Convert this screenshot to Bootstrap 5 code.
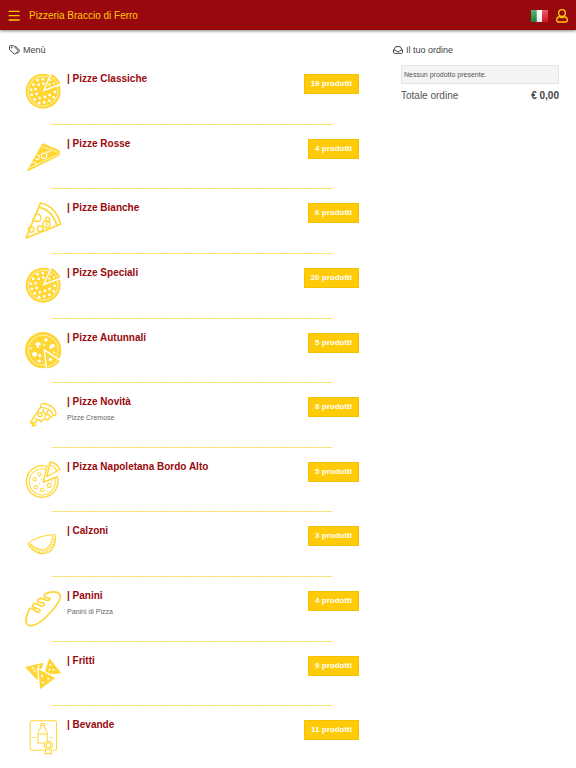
<!DOCTYPE html>
<html lang="it">
<head>
<meta charset="utf-8">
<meta name="viewport" content="width=device-width, initial-scale=1">
<title>Pizzeria Braccio di Ferro</title>
<link href="https://cdn.jsdelivr.net/npm/bootstrap@5.3.0/dist/css/bootstrap.min.css" rel="stylesheet">
<style>
:root { --brand: #99080d; --gold: #ffcb08; --sun: #ffd633; }
body { font-family: "Liberation Sans", Arial, sans-serif; font-size: 10px; line-height: 14px; color: #555; background: #fff; }
.topbar { background: var(--brand); height: 30px; padding: 1px 8px 0; box-shadow: 0 1px 3px rgba(0,0,0,.5); }
.topbar a, .topbar button { color: var(--gold); font-size: 10px; line-height: 14px; }
.bare { border: 0; background: none; padding: 0; display: block; }
.bare svg { display: block; }
.brand-name { margin-left: 9px; }
.heading { font-size: 9px; line-height: 14px; font-weight: 400; margin: 0; gap: 3px; padding: 13px 9px 3px; color: #444; }
.menu-list { display: grid; grid-auto-rows: 1fr; min-height: calc(100vh - 57px); }
.entry { padding: 12px 25px 0; }
.entry::after { content: ""; position: absolute; left: 52px; right: 52px; bottom: 0; height: 1px; background: repeating-linear-gradient(90deg, #ffdc55 0 2px, #fff3c4 2px 3px); }
.entry:last-child::after { display: none; }
.entry-icon { width: 37px; height: 37px; flex: none; margin-top: 1px; }
.entry-text { margin-left: 5px; }
.entry-title { font-size: 10px; line-height: 14px; font-weight: 700; margin: 0; }
.entry-title a { color: var(--brand); }
.entry-note { font-size: 7px; line-height: 10px; margin: 4px 0 0; color: #666; }
.count { font-size: 8px; line-height: 12px; font-weight: 700; color: #fff; background: var(--gold); border: 1px solid #f4c000; border-radius: 0; padding: 3px 6px; margin-top: 2px; }
.count:hover { background: #f0bd00; color: #fff; }
.order { padding: 0 17px; }
.empty-note { font-size: 7px; line-height: 10px; background: #f4f4f4; border: 1px solid #e3e3e3; padding: 4px 2px 3px; margin: 5px 0 4px; }
.total { line-height: 16px; }
.total strong { color: #444; }
.ln { fill: none; stroke: var(--sun); stroke-width: 4; stroke-linejoin: round; stroke-linecap: round; }
.thin { stroke-width: 3; }
.thick { stroke-width: 5; }
.drip { stroke-width: 7; }
.crimp { stroke-width: 8; stroke-dasharray: 4 4; stroke-linecap: butt; }
.fl { fill: var(--sun); }
.wl { fill: none; stroke: #fff; stroke-width: 3; }
.wl-thin { fill: none; stroke: #fff; stroke-width: 2; }
.wf { fill: #fff; }
</style>
<script src="https://cdn.jsdelivr.net/npm/bootstrap@5.3.0/dist/js/bootstrap.bundle.min.js"></script>
</head>
<body>
<svg class="d-none" aria-hidden="true">
  <symbol id="whole-pizza" viewBox="0 0 108 108">
    <circle class="fl" cx="53" cy="53" r="51"/>
    <circle class="wl-thin" cx="53" cy="53" r="44"/>
    <g class="wf">
      <circle cx="37" cy="21" r="4"/><circle cx="52" cy="18" r="4"/><circle cx="24" cy="34" r="4"/><circle cx="40" cy="35" r="4"/><circle cx="54" cy="31" r="4"/>
      <circle cx="18" cy="49" r="4"/><circle cx="31" cy="47" r="4"/><circle cx="20" cy="64" r="4"/><circle cx="34" cy="61" r="4"/><circle cx="28" cy="77" r="4"/>
      <circle cx="43" cy="73" r="4"/><circle cx="41" cy="88" r="4"/><circle cx="56" cy="86" r="4"/><circle cx="58" cy="70" r="4"/><circle cx="71" cy="81" r="4"/>
      <circle cx="72" cy="64" r="4"/><circle cx="84" cy="71" r="4"/><circle cx="87" cy="55" r="4"/>
    </g>
    <path class="fl" d="M55 51 77 0Q96 8 106 32Z" stroke="#fff" stroke-width="4"/>
    <path class="wl-thin" d="M74 10Q90 17 97 33"/>
    <g class="wf"><circle cx="75" cy="21" r="3"/><circle cx="85" cy="30" r="3"/><circle cx="71" cy="34" r="3"/></g>
  </symbol>
</svg>

<header class="topbar d-flex align-items-center sticky-top">
  <button class="bare" type="button" aria-label="Apri menu">
    <svg width="12" height="12" viewBox="0 0 36 36" stroke="currentColor" stroke-width="4"><path d="M2 4h33M2 17h33M2 30h33"/></svg>
  </button>
  <a class="brand-name text-decoration-none me-auto" href="#">Pizzeria Braccio di Ferro</a>
  <button class="bare me-2" type="button" aria-label="Lingua: italiano">
    <svg width="17" height="12" viewBox="0 0 51 36">
      <defs><linearGradient id="gloss" x2="0" y2="1"><stop stop-color="#fff" stop-opacity=".3"/><stop offset=".5" stop-color="#fff" stop-opacity=".12"/><stop offset="1" stop-color="#000" stop-opacity=".08"/></linearGradient></defs>
      <path fill="#169144" d="M0 0h17v36H0z"/><path fill="#f8f8f8" d="M17 0h17v36H17z"/><path fill="#df1b29" d="M34 0h17v36H34z"/><path fill="url(#gloss)" d="M0 0h51v36H0z"/>
    </svg>
  </button>
  <button class="bare" type="button" aria-label="Account">
    <svg width="12" height="14" viewBox="0 0 36 42" fill="none" stroke="currentColor" stroke-width="4"><circle cx="18" cy="12" r="10"/><path d="M9 23C4 25 2 29 2 34q0 5 4 5h24q4 0 4-5c0-5-2-9-7-11q-9 5-18 0Z"/></svg>
  </button>
</header>

<main class="container-fluid p-0">
  <div class="row g-0">
    <section class="col-8">
      <h1 class="heading d-flex align-items-center">
        <svg width="11" height="10" viewBox="0 0 33 30" fill="none" stroke="#444" stroke-width="3" stroke-linejoin="round"><path d="M1.500 4v9l14 14q2 1 3 0l8-8q1-2 0-3L13 2H4Q1.500 2 1.500 4Z"/><path d="m18 2 13 13q2 2 0 4l-8 8"/><circle cx="8" cy="8" r="1.500"/></svg>
        Menù
      </h1>
      <div class="menu-list">
        <article class="entry position-relative d-flex align-items-start">
          <svg class="entry-icon"><use href="#whole-pizza"/></svg>
          <div class="entry-text me-auto"><h2 class="entry-title"><a class="text-decoration-none" href="#">| Pizze Classiche</a></h2></div>
          <button class="btn count" type="button">19 prodotti</button>
        </article>
        <article class="entry position-relative d-flex align-items-start">
          <svg class="entry-icon" viewBox="0 0 108 108">
            <path class="fl" d="M49 18q2-3 6-2l42 18q6 3 5 9l-2 9L10 96q-4 1-2-4Z"/>
            <path class="wl-thin" d="M48 25 97 42M14 87 97 48"/>
            <circle class="wl" cx="56" cy="52" r="8"/><path class="wl" d="M34 49q13 2 7 11-4 5-11 0M22 72q11-5 12 7M75 36q-5 8-13 4"/>
          </svg>
          <div class="entry-text me-auto"><h2 class="entry-title"><a class="text-decoration-none" href="#">| Pizze Rosse</a></h2></div>
          <button class="btn count" type="button">4 prodotti</button>
        </article>
        <article class="entry position-relative d-flex align-items-start">
          <svg class="entry-icon" viewBox="0 0 108 108">
            <path class="ln thick" d="M45 3Q91 13 104 65L3 105ZM40 15Q81 25 93 69"/>
            <g class="ln"><path d="M30 36q15-3 17 9-1 13-13 12-8-1-11-7"/><circle cx="18" cy="80" r="8"/><circle cx="44" cy="78" r="8"/><circle cx="63" cy="65" r="10"/><circle cx="66" cy="51" r="6"/><path d="M63 61v8"/></g>
          </svg>
          <div class="entry-text me-auto"><h2 class="entry-title"><a class="text-decoration-none" href="#">| Pizze Bianche</a></h2></div>
          <button class="btn count" type="button">6 prodotti</button>
        </article>
        <article class="entry position-relative d-flex align-items-start">
          <svg class="entry-icon"><use href="#whole-pizza"/></svg>
          <div class="entry-text me-auto"><h2 class="entry-title"><a class="text-decoration-none" href="#">| Pizze Speciali</a></h2></div>
          <button class="btn count" type="button">20 prodotti</button>
        </article>
        <article class="entry position-relative d-flex align-items-start">
          <svg class="entry-icon" viewBox="0 0 108 108">
            <circle class="fl" cx="53" cy="53" r="53"/><circle class="wl-thin" cx="53" cy="53" r="44"/>
            <g class="wf"><path d="M29 38q1-8 8-9 9 0 10 8l-7 2 2 7h-7l-1-7ZM72 41l7-7q9 2 8 10l-8 2-4 5-4-4ZM38 66l7-2 3 7-6 3ZM35 84l8-4 5 6-7 3Z"/><circle cx="28" cy="65" r="7"/><circle cx="61" cy="23" r="5"/><circle cx="17" cy="48" r="3"/><circle cx="56" cy="38" r="3"/><circle cx="85" cy="60" r="3"/></g>
            <path class="fl" d="M56 52 104 84Q91 106 63 108Z" stroke="#fff" stroke-width="4"/>
            <path class="wl-thin" d="M95 84Q83 97 67 101"/><circle class="wf" cx="74" cy="80" r="5"/>
          </svg>
          <div class="entry-text me-auto"><h2 class="entry-title"><a class="text-decoration-none" href="#">| Pizze Autunnali</a></h2></div>
          <button class="btn count" type="button">5 prodotti</button>
        </article>
        <article class="entry position-relative d-flex align-items-start">
          <svg class="entry-icon" viewBox="0 0 108 108">
            <path class="ln" d="M46 27q2-7 9-5 29 5 35 26 2 8-4 9-5 0-7-6-6-15-28-17-7-1-5-7ZM45 34 18 73q-3 6 1 7l4-2 2 8q5 2 6-3l-1-9 13-5 2 5q5 2 6-4l10-4 2 4q6 2 6-5l10-5"/><g class="ln"><circle cx="44" cy="55" r="6"/><path d="M53 40q-1 9 7 10 7-1 7-7M58 62q0-9 8-8 7 1 7 7M29 66q7-1 7 6"/></g>
            <path class="ln drip" d="M23 78v8"/>
          </svg>
          <div class="entry-text me-auto"><h2 class="entry-title"><a class="text-decoration-none" href="#">| Pizze Novità</a></h2><p class="entry-note">Pizze Cremose</p></div>
          <button class="btn count" type="button">8 prodotti</button>
        </article>
        <article class="entry position-relative d-flex align-items-start">
          <svg class="entry-icon" viewBox="0 0 108 108">
            <path class="ln" d="M64 16A46 46 0 1 0 94 46L53 62Z"/><path class="ln thin" d="M59 24A38 38 0 1 0 87 51"/>
            <path class="ln" d="M73 3Q94 7 102 24L64 46ZM71 12Q86 14 92 28"/>
            <g class="ln thin"><circle cx="42" cy="39" r="5"/><circle cx="28" cy="53" r="5"/><circle cx="31" cy="76" r="5"/><circle cx="50" cy="85" r="5"/><circle cx="71" cy="71" r="6"/><path d="M46 53h1M42 65h1M55 71h1M20 66h1M78 58h1M64 86h1M77 23h1"/></g>
          </svg>
          <div class="entry-text me-auto"><h2 class="entry-title"><a class="text-decoration-none" href="#">| Pizza Napoletana Bordo Alto</a></h2></div>
          <button class="btn count" type="button">5 prodotti</button>
        </article>
        <article class="entry position-relative d-flex align-items-start">
          <svg class="entry-icon" viewBox="0 0 108 108">
            <path class="ln thin" d="M8 55Q36 31 88 28 94 80 52 84 27 83 8 55Z"/>
            <path class="ln thin" d="M17 55Q33 73 54 72 77 68 80 34"/>
            <path class="ln crimp" d="M14 59Q32 80 53 79 83 75 86 34"/>
          </svg>
          <div class="entry-text me-auto"><h2 class="entry-title"><a class="text-decoration-none" href="#">| Calzoni</a></h2></div>
          <button class="btn count" type="button">3 prodotti</button>
        </article>
        <article class="entry position-relative d-flex align-items-start">
          <svg class="entry-icon" viewBox="0 0 108 108">
            <path class="ln thick" d="M11 60Q-5 96 10 103 33 110 70 70 108 31 102 15 96 0 63 9M11 60q3-11 13-4l7 6q7 5 12 1 3-7-8-9-14-3-13-8 1-9 14-5l8 4q9 4 12-1 2-6-9-7-11-1-10-7 4-9 16-4l9 4q8 2 10-2 1-6-9-6-8-1-7-6 1-6 8-7"/>
          </svg>
          <div class="entry-text me-auto"><h2 class="entry-title"><a class="text-decoration-none" href="#">| Panini</a></h2><p class="entry-note">Panini di Pizza</p></div>
          <button class="btn count" type="button">4 prodotti</button>
        </article>
        <article class="entry position-relative d-flex align-items-start">
          <svg class="entry-icon" viewBox="0 0 108 108">
            <path class="fl" d="M0 35 50 23q4 0 3 4L38 70q-2 3-5 0ZM71 9 106 53q-22 4-50 2Z"/>
            <path class="fl" d="M37 38 92 67 46 101q-3 1-4-3Z" stroke="#fff" stroke-width="4"/>
            <g class="wf"><circle cx="28" cy="46" r="3"/><circle cx="40" cy="32" r="3"/><circle cx="22" cy="38" r="3"/><circle cx="74" cy="29" r="3"/><circle cx="83" cy="44" r="3"/><circle cx="72" cy="43" r="3"/><circle cx="50" cy="61" r="3"/><circle cx="68" cy="69" r="3"/><circle cx="53" cy="80" r="3"/></g>
          </svg>
          <div class="entry-text me-auto"><h2 class="entry-title"><a class="text-decoration-none" href="#">| Fritti</a></h2></div>
          <button class="btn count" type="button">9 prodotti</button>
        </article>
        <article class="entry position-relative d-flex align-items-start">
          <svg class="entry-icon" viewBox="0 0 108 108">
            <g class="ln thin"><path d="M57 91H20q-5 0-5-5V10q0-5 5-5h67q5 0 5 5v76q0 5-5 5h-6M46 13h11v13q8 7 8 15v22M54 70H38V41q0-8 8-15V13M46 19h11M38 44h27M22 54h2M29 54h2M73 54h2M80 54h2M61 88l-3 15 10-4 10 4-3-15"/><circle cx="68" cy="77" r="12" fill="#fff"/><circle cx="68" cy="77" r="7"/></g>
          </svg>
          <div class="entry-text me-auto"><h2 class="entry-title"><a class="text-decoration-none" href="#">| Bevande</a></h2></div>
          <button class="btn count" type="button">11 prodotti</button>
        </article>
      </div>
    </section>
    <aside class="col-4">
      <h1 class="heading d-flex align-items-center">
        <svg width="10" height="8" viewBox="0 0 30 24" fill="none" stroke="#444" stroke-width="3" stroke-linejoin="round"><path d="M1.500 13 8 2h14l6.500 11v6q0 3-3 3h-21q-3 0-3-3ZM2 13h7l3 4h6l3-4h7"/></svg>
        Il tuo ordine
      </h1>
      <div class="order">
        <p class="empty-note">Nessun prodotto presente.</p>
        <div class="total d-flex justify-content-between"><span>Totale ordine</span><strong>€ 0,00</strong></div>
      </div>
    </aside>
  </div>
</main>
</body>
</html>
